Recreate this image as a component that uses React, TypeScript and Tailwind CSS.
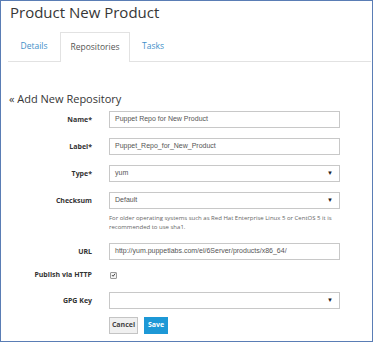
import React from 'react';

const labelCls =
  "w-[93px] pr-[2px] shrink-0 text-right text-[7px] leading-[10px] font-bold text-[#333] font-['Open_Sans',sans-serif]";
const fieldCls =
  "ml-[15px] w-[231px] h-[17px] border border-[#c8c8c8] bg-white flex items-center px-[5px] text-[7px] text-[#555] font-['Liberation_Sans',Arial,sans-serif]";

const Row: React.FC<{ label: string; className?: string; children: React.ReactNode }> = ({
  label,
  className,
  children,
}) => (
  <div className={`flex items-center ${className ?? ''}`}>
    <div className={labelCls}>{label}</div>
    {children}
  </div>
);

const Select: React.FC<{ value: string }> = ({ value }) => (
  <div className={`${fieldCls} justify-between`}>
    <span>{value}</span>
    <span className="text-[6px] text-[#222] pr-[1px]">▼</span>
  </div>
);

const App: React.FC = () => {
  return (
    <div className="w-[375px] h-[343px] bg-white">
      <div className="w-[373px] h-[342px] border border-[#5a7db5] bg-white overflow-hidden font-['Open_Sans',sans-serif]">
        {/* Header */}
        <h1 className="pl-[9px] pt-[1px] text-[15px] leading-[20px] text-[#363636]">
          Product New Product
        </h1>

        {/* Tabs */}
        <div className="mt-[10px] ml-[7px] mr-[1px] flex border-b border-[#e2e2e2] h-[30px] text-[8.5px]">
          <div className="w-[52px] flex items-center justify-center text-[#3f8fc9]">Details</div>
          <div className="w-[70px] -mb-px flex items-center justify-center border border-b-0 border-[#e2e2e2] bg-white text-[#555]">
            Repositories
          </div>
          <div className="w-[46px] flex items-center justify-center text-[#3f8fc9]">Tasks</div>
        </div>

        {/* Form */}
        <div className="mt-[30px] pl-[8px] text-[11px] leading-[14px] text-[#363636]">
          « Add New Repository
        </div>

        <div className="mt-[5px] flex flex-col">
          <Row label="Name*">
            <div className={fieldCls}>Puppet Repo for New Product</div>
          </Row>
          <Row label="Label*" className="mt-[10px]">
            <div className={fieldCls}>Puppet_Repo_for_New_Product</div>
          </Row>
          <Row label="Type*" className="mt-[10px]">
            <Select value="yum" />
          </Row>
          <Row label="Checksum" className="mt-[10px]">
            <Select value="Default" />
          </Row>
          <div className="ml-[108px] mt-[5px] w-[240px] text-[6px] leading-[9px] text-[#666]">
            For older operating systems such as Red Hat Enterprise Linux 5 or CentOS 5 it is
            recommended to use sha1.
          </div>
          <Row label="URL" className="mt-[11px]">
            <div className={fieldCls}>http://yum.puppetlabs.com/el/6Server/products/x86_64/</div>
          </Row>
          <Row label="Publish via HTTP" className="mt-[10px]">
            <div className="ml-[16px] w-[7px] h-[7px] border border-[#999] rounded-[1px] bg-[#f4f4f4] flex items-center justify-center">
              <svg viewBox="0 0 10 10" className="w-[6px] h-[6px]">
                <path d="M2 5.2 L4.2 7.5 L8.3 2.3" fill="none" stroke="#333" strokeWidth="1.8" />
              </svg>
            </div>
          </Row>
          <Row label="GPG Key" className="mt-[12px]">
            <Select value="" />
          </Row>
          <div className="ml-[108px] mt-[8px] flex gap-[6px] text-[7px] font-bold h-[17px]">
            <button className="w-[29px] h-full border border-[#c4c4c4] bg-[#f0f0f0] text-[#444]">
              Cancel
            </button>
            <button className="w-[24px] h-full bg-[#1d98d6] text-white">Save</button>
          </div>
        </div>
      </div>
    </div>
  );
};

export default App;
